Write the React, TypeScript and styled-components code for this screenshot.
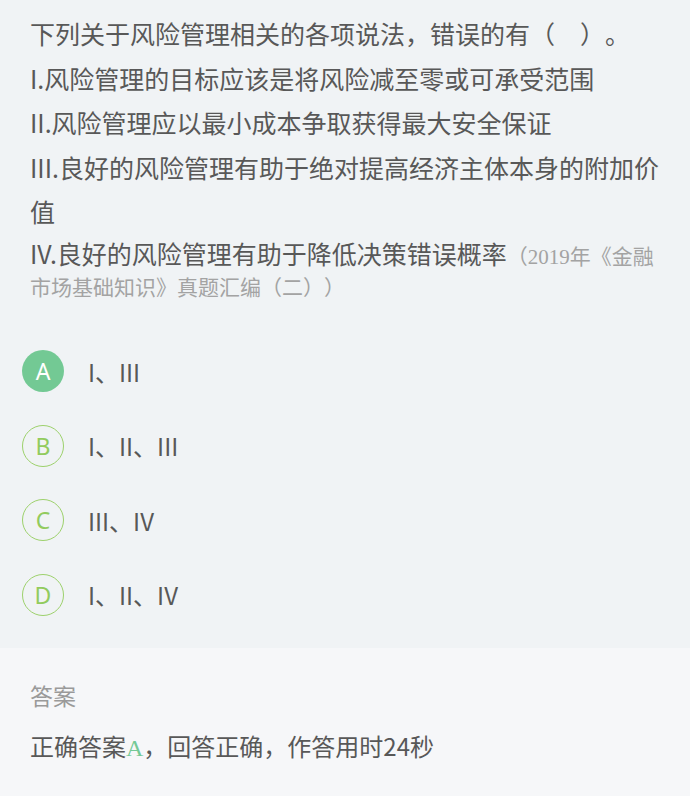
import React from "react";
import styled, { createGlobalStyle } from "styled-components";

const Global = createGlobalStyle`
  html, body { margin: 0; padding: 0; background: #f6f7f9; }
  body {
    font-family: "Noto Sans CJK SC", "Noto Sans", sans-serif;
    text-spacing-trim: space-all;
  }
`;

const Page = styled.div`
  width: 690px;
  min-height: 796px;
  display: flex;
  flex-direction: column;
  background: #f6f7f9;
`;

const QuestionPanel = styled.section`
  background: #f0f3f5;
  padding: 11px 20px 16px 30px;
`;

const Stem = styled.div`
  color: #585858;
  font-size: 25px;
  line-height: 44.5px;
`;

const StemLine = styled.p<{ $tight?: boolean }>`
  margin: ${(p) => (p.$tight ? "4px 0 0" : "0")};
  line-height: ${(p) => (p.$tight ? "31px" : "44.5px")};
`;

const Source = styled.span`
  color: #a3a3a3;
  font-size: 21px;
  line-height: 1;
  font-family: "Liberation Serif", "Noto Sans CJK SC", serif;
`;

const Options = styled.ul`
  list-style: none;
  margin: 34.5px 0 0;
  padding: 0;
  display: flex;
  flex-direction: column;
`;

const OptionRow = styled.li`
  height: 74.5px;
  display: flex;
  align-items: center;
  gap: 24px;
  margin-left: -8px;
`;

const Badge = styled.span<{ $selected?: boolean }>`
  width: 42px;
  height: 42px;
  box-sizing: border-box;
  border-radius: 50%;
  display: flex;
  align-items: center;
  justify-content: center;
  font-size: 23px;
  font-family: "Noto Sans", "Noto Sans CJK SC", sans-serif;
  background: ${(p) => (p.$selected ? "#73c994" : "transparent")};
  color: ${(p) => (p.$selected ? "#ffffff" : "#92cb5e")};
  border: ${(p) => (p.$selected ? "none" : "1.5px solid #9dd16c")};
`;

const OptionText = styled.span`
  color: #585858;
  font-size: 24px;
  font-family: "Noto Sans CJK SC", sans-serif;
`;

const AnswerPanel = styled.section`
  flex: 1;
  background: #f6f7f9;
  padding: 29px 20px 0 30px;
`;

const AnswerLabel = styled.div`
  color: #9a9a9a;
  font-size: 23px;
  line-height: 36px;
`;

const AnswerText = styled.div`
  margin-top: 15px;
  color: #585858;
  font-size: 24px;
  line-height: 36px;
`;

const Correct = styled.span`
  color: #74c996;
  font-family: "Liberation Serif", serif;
`;

const options = [
  { key: "A", text: "I、III", selected: true },
  { key: "B", text: "I、II、III" },
  { key: "C", text: "III、IV" },
  { key: "D", text: "I、II、IV" },
];

export default function App() {
  return (
    <Page>
      <Global />
      <QuestionPanel>
        <Stem>
          <StemLine>下列关于风险管理相关的各项说法，错误的有（　）。</StemLine>
          <StemLine>I.风险管理的目标应该是将风险减至零或可承受范围</StemLine>
          <StemLine>II.风险管理应以最小成本争取获得最大安全保证</StemLine>
          <StemLine>III.良好的风险管理有助于绝对提高经济主体本身的附加价值</StemLine>
          <StemLine $tight>
            IV.良好的风险管理有助于降低决策错误概率
            <Source>（2019年《金融市场基础知识》真题汇编（二））</Source>
          </StemLine>
        </Stem>
        <Options>
          {options.map((o) => (
            <OptionRow key={o.key}>
              <Badge $selected={o.selected}>{o.key}</Badge>
              <OptionText>{o.text}</OptionText>
            </OptionRow>
          ))}
        </Options>
      </QuestionPanel>
      <AnswerPanel>
        <AnswerLabel>答案</AnswerLabel>
        <AnswerText>
          正确答案<Correct>A</Correct>，回答正确，作答用时24秒
        </AnswerText>
      </AnswerPanel>
    </Page>
  );
}
